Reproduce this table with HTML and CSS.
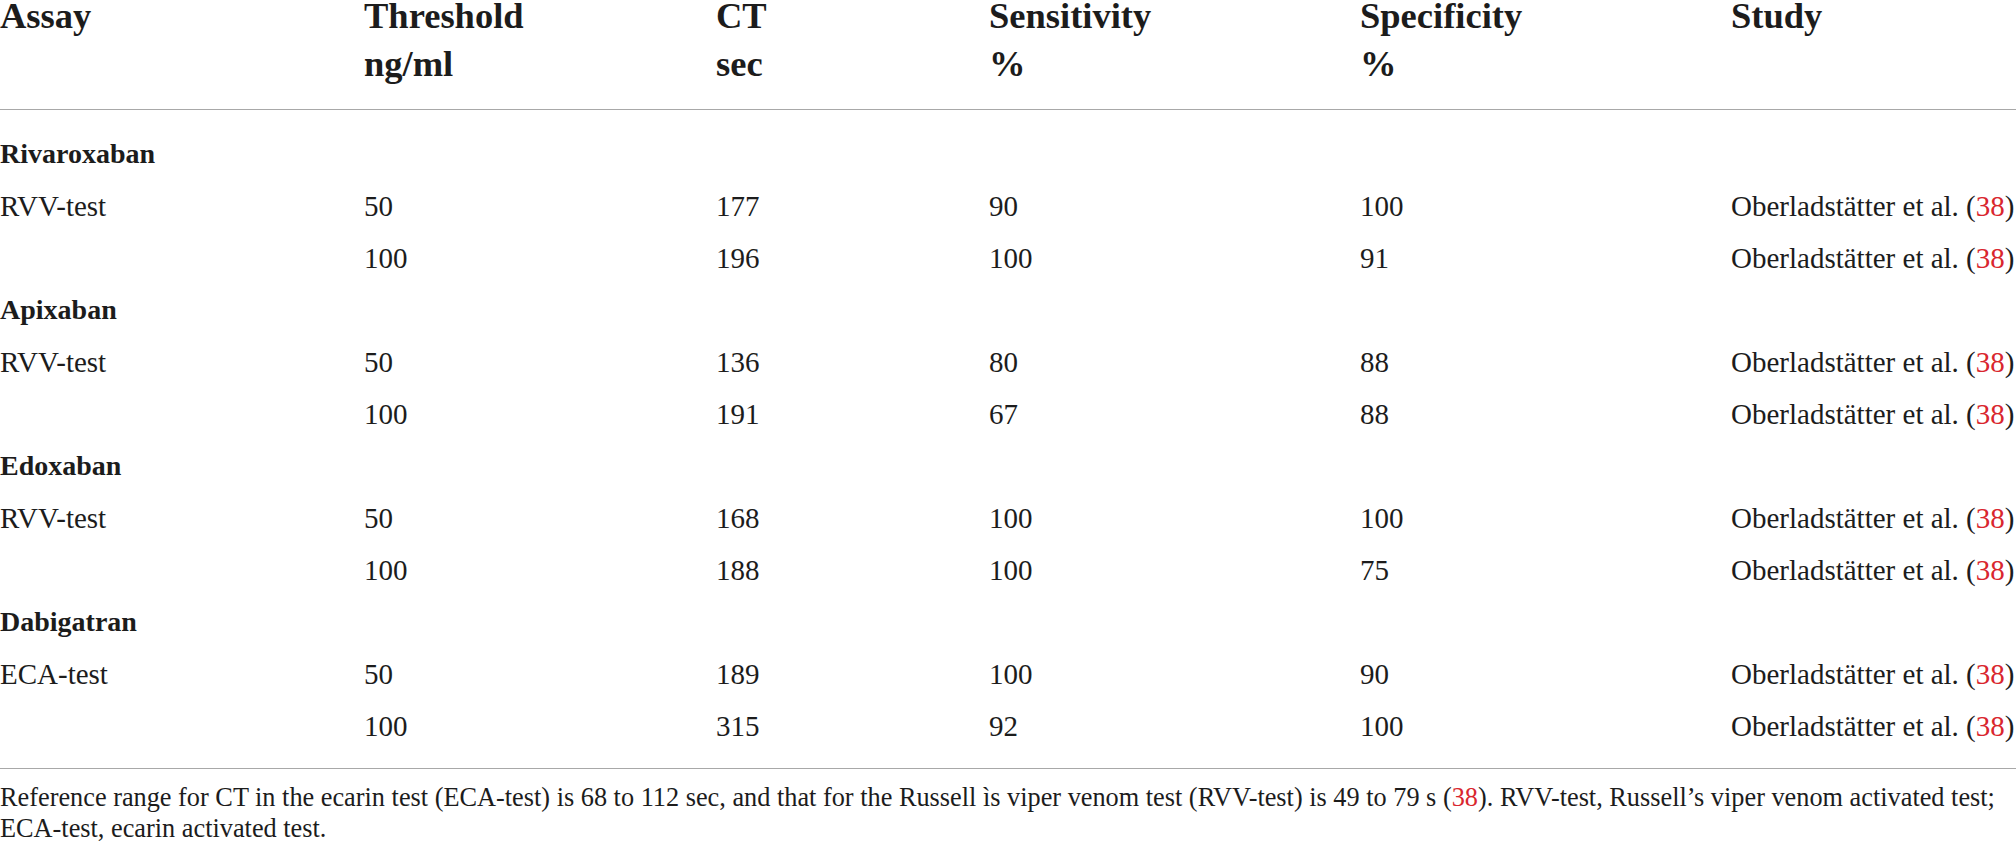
FILE: index.html
```html
<!DOCTYPE html>
<html>
<head>
<meta charset="utf-8">
<link rel="stylesheet" href="styles.css">
</head>
<body>
<table class="data">
  <colgroup>
    <col class="c1"><col class="c2"><col class="c3"><col class="c4"><col class="c5"><col class="c6">
  </colgroup>
  <thead>
    <tr>
      <th><div class="hcell"><span>Assay</span></div></th>
      <th><div class="hcell"><span>Threshold</span><span>ng/ml</span></div></th>
      <th><div class="hcell"><span>CT</span><span>sec</span></div></th>
      <th><div class="hcell"><span>Sensitivity</span><span>%</span></div></th>
      <th><div class="hcell"><span>Specificity</span><span>%</span></div></th>
      <th><div class="hcell"><span>Study</span></div></th>
    </tr>
  </thead>
  <tbody>
    <tr class="group first"><td>Rivaroxaban</td><td></td><td></td><td></td><td></td><td></td></tr>
    <tr><td>RVV-test</td><td>50</td><td>177</td><td>90</td><td>100</td><td>Oberladstätter et al. (<span class="ref">38</span>)</td></tr>
    <tr><td></td><td>100</td><td>196</td><td>100</td><td>91</td><td>Oberladstätter et al. (<span class="ref">38</span>)</td></tr>
    <tr class="group"><td>Apixaban</td><td></td><td></td><td></td><td></td><td></td></tr>
    <tr><td>RVV-test</td><td>50</td><td>136</td><td>80</td><td>88</td><td>Oberladstätter et al. (<span class="ref">38</span>)</td></tr>
    <tr><td></td><td>100</td><td>191</td><td>67</td><td>88</td><td>Oberladstätter et al. (<span class="ref">38</span>)</td></tr>
    <tr class="group"><td>Edoxaban</td><td></td><td></td><td></td><td></td><td></td></tr>
    <tr><td>RVV-test</td><td>50</td><td>168</td><td>100</td><td>100</td><td>Oberladstätter et al. (<span class="ref">38</span>)</td></tr>
    <tr><td></td><td>100</td><td>188</td><td>100</td><td>75</td><td>Oberladstätter et al. (<span class="ref">38</span>)</td></tr>
    <tr class="group"><td>Dabigatran</td><td></td><td></td><td></td><td></td><td></td></tr>
    <tr><td>ECA-test</td><td>50</td><td>189</td><td>100</td><td>90</td><td>Oberladstätter et al. (<span class="ref">38</span>)</td></tr>
    <tr class="last"><td></td><td>100</td><td>315</td><td>92</td><td>100</td><td>Oberladstätter et al. (<span class="ref">38</span>)</td></tr>
  </tbody>
</table>
<p class="note">Reference range for CT in the ecarin test (ECA-test) is 68 to 112 sec, and that for the Russell ìs viper venom test (RVV-test) is 49 to 79 s (<span class="ref">38</span>). RVV-test, Russell’s viper venom activated test; ECA-test, ecarin activated test.</p>
</body>
</html>
```

FILE: styles.css
```css
html, body {
  margin: 0;
  padding: 0;
  background: #ffffff;
}

body {
  width: 2016px;
  font-family: "Liberation Serif", "Times New Roman", serif;
  color: #1c1c1c;
}

.data {
  width: 2016px;
  border-collapse: collapse;
  table-layout: fixed;
}

.c1 { width: 364px; }
.c2 { width: 352px; }
.c3 { width: 273px; }
.c4 { width: 371px; }
.c5 { width: 371px; }
.c6 { width: 285px; }

.data th {
  padding: 0 0 30px 0;
  text-align: left;
  vertical-align: top;
  font-weight: 700;
  font-size: 36.5px;
  border-bottom: 1px solid #a8a8a8;
}

.hcell {
  display: flex;
  flex-direction: column;
  gap: 17px;
  line-height: 31px;
  white-space: nowrap;
}

.data td {
  padding: 0;
  font-size: 29px;
  line-height: 52px;
  height: 52px;
  white-space: nowrap;
  vertical-align: middle;
}

.data tr.first td {
  padding-top: 18px;
}

.data tr.last td {
  padding-bottom: 16px;
  border-bottom: 1px solid #a8a8a8;
}

.data tr.group td {
  font-weight: 700;
  font-size: 28px;
}

.ref {
  color: #d9262e;
}

.note {
  margin: 0;
  padding-top: 13px;
  font-size: 26.3px;
  line-height: 31px;
}
```
